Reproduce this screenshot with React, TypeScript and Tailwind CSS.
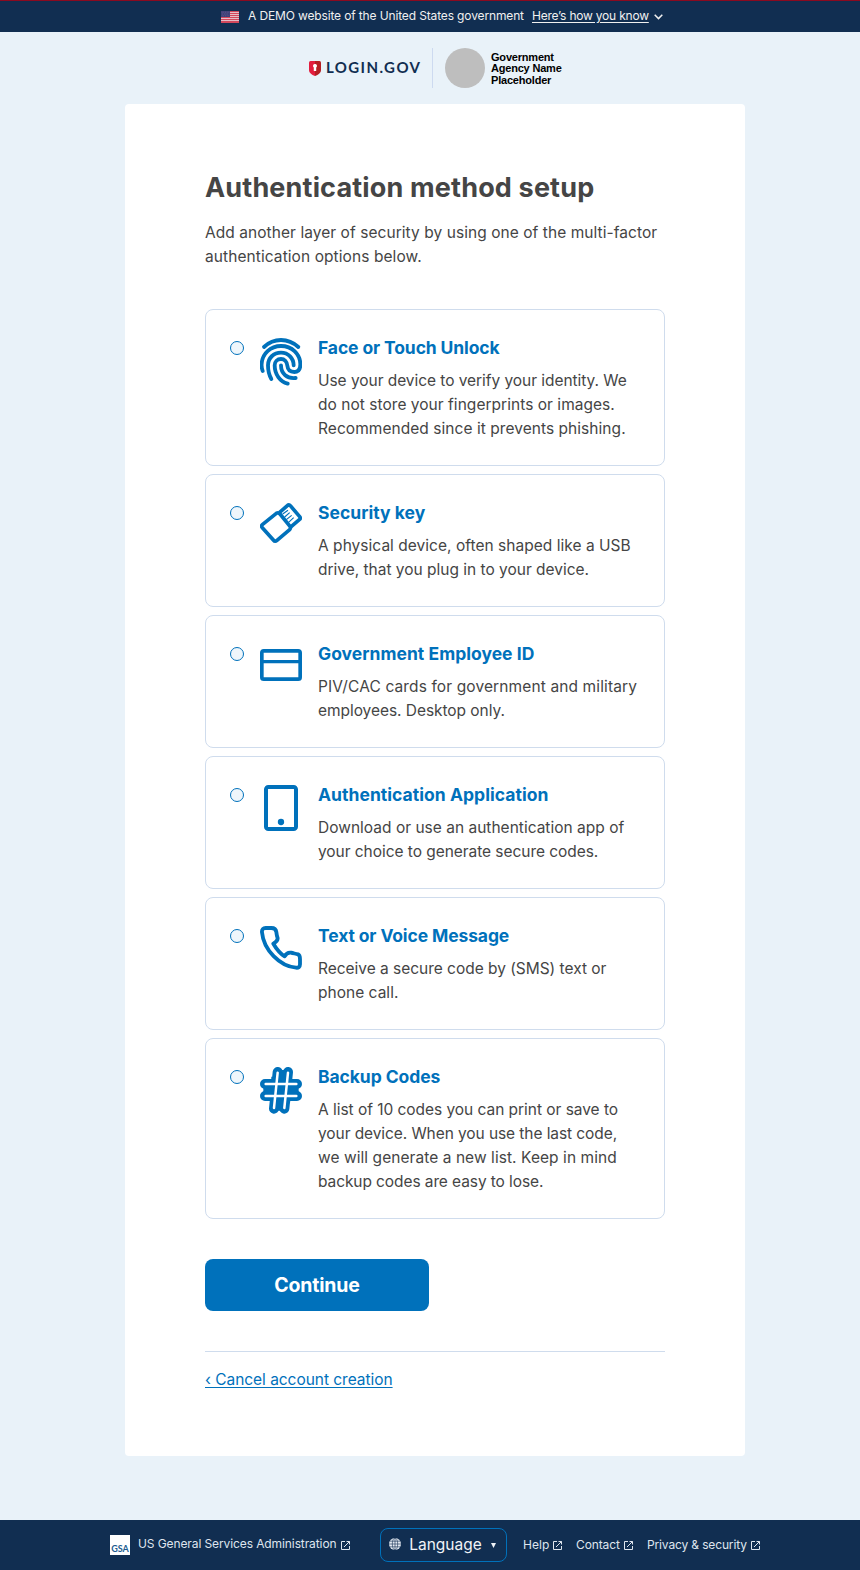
import React from 'react';

type Line = [text: string, tracking: string];

function FingerprintIcon() {
  return (
    <svg className="h-12 w-[42px]" viewBox="180 113 126 144" fill="none" stroke="#0071bb" strokeWidth="11.500" strokeLinecap="round" strokeLinejoin="round">
      <path d="M192 140Q214 119 243 119Q272 119 295 140" />
      <path d="M188 212C185 203 184 197 185 190C187 160 211 137 243 137C276 137 301 161 301 192C301 207 294 215 283 215C270 215 263 207 262 196C261 184 253 176 243 176C232 176 224 184 224 195C224 222 240 244 263 250" />
      <path d="M214 236C207 224 204 209 204 195C204 173 221 157 243 157C265 157 281 174 281 195" />
      <path d="M243 195C243 221 262 236 287 233" />
    </svg>
  );
}

function SecurityKeyIcon() {
  return (
    <svg className="h-12 w-[42px]" viewBox="180 98 126 144" fill="none" stroke="#0071bb" strokeWidth="11" strokeLinejoin="round">
      <path d="M187 163L229 129Q235 125 240 131L270 168Q273 173 269 178L231 210Q225 215 220 209L187 172Q182 167 187 163Z" />
      <path d="M238 127L262 106Q267 101 271 106L299 139Q303 144 298 148L270 172" />
      <path strokeWidth="3.500" d="M248 131L264 120M254 140L269 127M259 148L275 135M265 157L281 142" />
    </svg>
  );
}

function CardIcon() {
  return (
    <svg className="h-12 w-[42px]" viewBox="180 96 126 144" fill="none" stroke="#0071bb" strokeWidth="11">
      <rect x="185.500" y="116.500" width="115" height="85" rx="6" />
      <path strokeWidth="10" d="M185 149H301" />
    </svg>
  );
}

function TabletIcon() {
  return (
    <svg className="h-12 w-[42px]" viewBox="180 90 126 144" fill="none" stroke="#0071bb" strokeWidth="12">
      <rect x="198" y="96" width="90" height="126" rx="7" />
      <circle cx="243" cy="201" r="9.500" fill="#0071bb" stroke="none" />
    </svg>
  );
}

function PhoneIcon() {
  return (
    <svg className="h-12 w-[42px]" viewBox="180 93 126 144" fill="none" stroke="#0071bb" strokeWidth="11.500" strokeLinejoin="round">
      <path d="M186 112C185 103 190 99 197 99H214C223 99 228 103 229 111C230 120 231 125 233 130C233 139 225 143 220 146C230 163 240 175 254 184C258 176 265 172 273 173C280 175 287 176 294 178C300 181 300 187 300 192V208C300 216 295 219 288 218C240 214 191 165 186 112Z" />
    </svg>
  );
}

function HashIcon() {
  return (
    <svg className="h-12 w-[42px]" viewBox="180 97 126 144" fill="none" strokeLinecap="round">
      <path stroke="#0071bb" strokeWidth="30" d="M233 112L222 222M264 112L253 222M195 148H291M195 184H291" />
      <path fill="#0071bb" d="M190 148H296V184H190ZM233 106H264L253 228H222ZM214 126H276L270 206H210Z" />
      <path stroke="#fff" strokeWidth="7.500" d="M233 114L222 220M264 114L253 220M197 148H289M197 184H289" />
    </svg>
  );
}

const OPTIONS: { title: Line; lines: Line[]; icon: React.ReactNode }[] = [
  {
    title: ['Face or Touch Unlock', 'tracking-[-0.12px]'],
    lines: [
      ['Use your device to verify your identity. We', 'tracking-[-0.05px]'],
      ['do not store your fingerprints or images.', 'tracking-[0.035px]'],
      ['Recommended since it prevents phishing.', 'tracking-[0.05px]'],
    ],
    icon: <FingerprintIcon />,
  },
  {
    title: ['Security key', 'tracking-[0.03px]'],
    lines: [
      ['A physical device, often shaped like a USB', 'tracking-[0.03px]'],
      ['drive, that you plug in to your device.', 'tracking-[-0.01px]'],
    ],
    icon: <SecurityKeyIcon />,
  },
  {
    title: ['Government Employee ID', 'tracking-[0.03px]'],
    lines: [
      ['PIV/CAC cards for government and military', 'tracking-[0.12px]'],
      ['employees. Desktop only.', 'tracking-[-0.05px]'],
    ],
    icon: <CardIcon />,
  },
  {
    title: ['Authentication Application', 'tracking-[0.04px]'],
    lines: [
      ['Download or use an authentication app of', 'tracking-[0.01px]'],
      ['your choice to generate secure codes.', 'tracking-[-0.05px]'],
    ],
    icon: <TabletIcon />,
  },
  {
    title: ['Text or Voice Message', 'tracking-[-0.12px]'],
    lines: [
      ['Receive a secure code by (SMS) text or', 'tracking-[-0.025px]'],
      ['phone call.', 'tracking-[0.02px]'],
    ],
    icon: <PhoneIcon />,
  },
  {
    title: ['Backup Codes', 'tracking-[-0.08px]'],
    lines: [
      ['A list of 10 codes you can print or save to', 'tracking-[-0.04px]'],
      ['your device. When you use the last code,', 'tracking-[-0.08px]'],
      ['we will generate a new list. Keep in mind', 'tracking-[0.06px]'],
      ['backup codes are easy to lose.', 'tracking-[-0.09px]'],
    ],
    icon: <HashIcon />,
  },
];

function Flag() {
  return (
    <svg className="h-3 w-[18px]" viewBox="0 0 18 12">
      <path fill="#e6bcc6" d="M0 0h18v12H0z" />
      <path fill="#d3485c" d="M0 0h18v1H0zM0 2h18v1H0zM0 4h18v1H0zM0 6h18v1H0zM0 8h18v1H0zM0 10h18v2H0z" />
      <path fill="#3f3f77" d="M0 0h9v6H0z" />
      <path stroke="#77779f" strokeWidth=".6" strokeDasharray=".7 1" d="M.7 1.200h8M1.300 3h7M.7 4.800h8" />
    </svg>
  );
}

function LaunchIcon() {
  return (
    <svg className="h-[9px] w-[9px] shrink-0" viewBox="0 0 18 18" fill="none" stroke="#dfe5ee" strokeWidth="2">
      <path d="M8 1H1v16h16v-7M11 1h6v6M17 1L6 12" />
    </svg>
  );
}

function Banner() {
  return (
    <header className="flex h-8 w-full items-center border-t border-[#8b0a20] bg-[#112e51] pl-[221px] text-xs text-[#f0f0f0]">
      <Flag />
      <span className="ml-[9px] w-[284px] pb-0.5 tracking-[-0.138px] whitespace-nowrap">A DEMO website of the United States government</span>
      <a className="w-[117px] pb-0.5 tracking-[-0.21px] whitespace-nowrap underline underline-offset-2">Here’s how you know</a>
      <svg className="mt-px ml-[5px] h-[6px] w-[9px]" viewBox="0 0 9 6" fill="none" stroke="#f0f0f0" strokeWidth="1.500">
        <path d="M.7.8l3.800 3.800L8.300.8" />
      </svg>
    </header>
  );
}

function Brands() {
  return (
    <div className="flex h-[72px] items-center pl-[309px]">
      <svg className="h-[15px] w-3" viewBox="0 0 12 15">
        <path fill="#e21d3e" d="M1.500 0H6v15C2.500 13.600 0 12 0 9V1.500Q0 0 1.500 0Z" />
        <path fill="#b51e23" d="M10.500 0H6v15c3.500-1.400 6-3 6-6V1.500Q12 0 10.500 0Z" />
        <path fill="#fff" d="M6 3a2 2 0 0 1 1.200 3.600V10H4.800V6.600A2 2 0 0 1 6 3Z" />
      </svg>
      <span className="ml-[5px] w-[106px] pb-0.5 font-['Lato',sans-serif] text-[15px] leading-none font-bold tracking-[1.4px] text-[#112e51]">LOGIN.GOV</span>
      <div className="h-10 w-px bg-[#cddaf0]" />
      <div className="ml-3 size-10 rounded-full bg-[#bebebe]" />
      <div className="ml-1.5 pt-0.5 font-['Liberation_Sans',sans-serif] text-[11px] leading-[11.500px] font-bold tracking-[-0.2px] text-black">
        Government
        <br />
        Agency Name
        <br />
        Placeholder
      </div>
    </div>
  );
}

function OptionCard({ title, lines, icon }: (typeof OPTIONS)[number]) {
  return (
    <label className="flex rounded-lg border border-[#cfdced] bg-white p-6 text-[#454545]">
      <span className="mt-[7px] size-[14px] shrink-0 rounded-full border border-[#0071bb] bg-[#eff6fb]" />
      <span className="mt-1 ml-4 shrink-0">{icon}</span>
      <span className="ml-4 flex flex-col whitespace-nowrap">
        <span className={`mb-2 text-[17.5px] leading-[27px] font-bold text-[#0071bb] ${title[1]}`}>{title[0]}</span>
        {lines.map(([text, tracking]) => (
          <span key={text} className={`text-[15.5px] leading-6 ${tracking}`}>
            {text}
          </span>
        ))}
      </span>
    </label>
  );
}

function Footer() {
  return (
    <footer className="mt-16 flex h-[50px] items-center bg-[#112e51] pl-[110px] text-xs whitespace-nowrap text-[#dfe5ee]">
      <div className="flex size-5 items-end justify-center bg-white pb-0.5 font-['Lato',sans-serif] text-[9px] leading-[9px] font-bold text-[#205c90]">GSA</div>
      <span className="mr-1 ml-2 w-[199px] pb-0.5 tracking-[-0.1px]">US General Services Administration</span>
      <LaunchIcon />
      <button className="ml-[30px] flex h-[34px] w-[127px] items-center rounded-lg border border-[#0071bb] pl-2 text-[15.5px] text-[#f0f3f7]">
        <svg className="mb-0.5 size-3" viewBox="0 0 12 12" fill="none" stroke="#112e51" strokeWidth=".6">
          <circle cx="6" cy="6" r="6" fill="#e3e9f1" stroke="none" />
          <ellipse cx="6" cy="6" rx="2.700" ry="6" />
          <path d="M6 0v12M0 6h12M1 3.200h10M1 8.800h10" />
        </svg>
        <span className="ml-2 w-[73px] tracking-[0.02px]">Language</span>
        <svg className="ml-[9px] h-[5px] w-[5px]" viewBox="0 0 5 5" fill="#f0f3f7">
          <path d="M0 0h5L2.500 5z" />
        </svg>
      </button>
      <span className="ml-4 w-[30px] tracking-[0.05px]">Help</span>
      <LaunchIcon />
      <span className="ml-[14px] w-12 tracking-[-0.12px]">Contact</span>
      <LaunchIcon />
      <span className="ml-[14px] w-[104px] tracking-[-0.14px]">Privacy &amp; security</span>
      <LaunchIcon />
    </footer>
  );
}

export default function App() {
  return (
    <div className="h-[1570px] w-[860px] bg-[#e9f2f9] font-['Inter',sans-serif] text-base">
      <Banner />
      <Brands />
      <main className="ml-[125px] flex h-[1352px] w-[620px] flex-col rounded bg-white px-20 pt-[65px] text-[#454545]">
        <h1 className="text-[27px] leading-[38px] font-bold tracking-[0.16px] whitespace-nowrap">Authentication method setup</h1>
        <p className="mt-[14px] flex flex-col text-[15.5px] leading-6 whitespace-nowrap">
          <span className="tracking-[0.06px]">Add another layer of security by using one of the multi-factor</span>
          <span className="tracking-[0.08px]">authentication options below.</span>
        </p>
        <div className="mt-10 flex flex-col gap-2">
          {OPTIONS.map((option) => (
            <OptionCard key={option.title[0]} {...option} />
          ))}
        </div>
        <button className="mt-10 h-[52px] w-56 shrink-0 rounded-lg bg-[#0071bb] pt-0.5 text-[19.5px] font-bold tracking-[-0.15px] text-white">Continue</button>
        <div className="mt-10 border-t border-[#cfdced] pt-[15px]">
          <a className="text-[15.5px] leading-6 tracking-[-0.04px] text-[#0071bb] underline underline-offset-2">‹ Cancel account creation</a>
        </div>
      </main>
      <Footer />
    </div>
  );
}
